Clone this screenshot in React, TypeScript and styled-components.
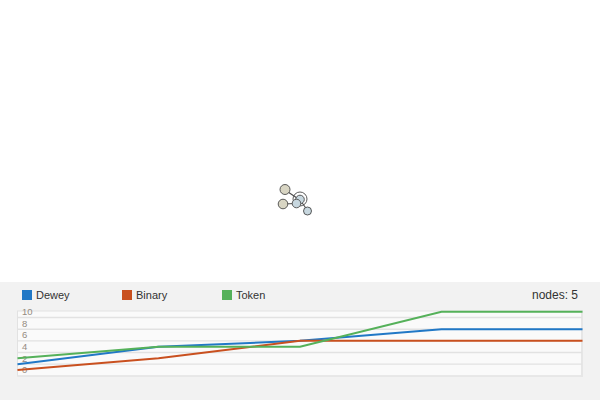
import React from "react";
import styled, { createGlobalStyle } from "styled-components";

const Global = createGlobalStyle`
  html, body { margin: 0; padding: 0; background: #ffffff; }
  body { font-family: "Liberation Sans", Arial, sans-serif; }
`;

const Page = styled.div`
  width: 600px;
  height: 400px;
  display: flex;
  flex-direction: column;
  overflow: hidden;
`;

const Canvas = styled.div`
  height: 282px;
  background: #ffffff;
  position: relative;
`;

const GraphSvg = styled.svg`
  display: block;
  width: 600px;
  height: 282px;
`;

const Panel = styled.div`
  flex: 1;
  background: #f2f2f2;
  padding: 0 17px;
  display: flex;
  flex-direction: column;
`;

const LegendRow = styled.div`
  height: 26px;
  display: flex;
  align-items: center;
  padding-left: 5px;
  margin-bottom: -4px;
`;

const LegendItem = styled.div`
  width: 100px;
  display: flex;
  align-items: center;
  gap: 4px;
  font-size: 11px;
  color: #333333;
`;

const Swatch = styled.span<{ $color: string }>`
  width: 10px;
  height: 10px;
  background: ${(p) => p.$color};
  display: inline-block;
`;

const NodeCount = styled.div`
  margin-left: auto;
  margin-right: 5px;
  font-size: 12px;
  color: #333333;
`;

const ChartSvg = styled.svg`
  display: block;
  width: 566px;
  height: 74px;
`;

const series = [
  { name: "Dewey", color: "#2178c6", data: [1, 4, 5, 7, 7] },
  { name: "Binary", color: "#c9501f", data: [0, 2, 5, 5, 5] },
  { name: "Token", color: "#55b15a", data: [2, 4, 4, 10, 10] },
];

const TOP = 7;
const xs = [0.5, 141.5, 283, 424.5, 565.5];
const yOf = (v: number) => TOP + 59 - 5.83 * v;

function Graph() {
  const stroke = "#4a4a4a";
  return (
    <GraphSvg viewBox="0 0 600 282">
      <line x1={285} y1={190} x2={300} y2={200} stroke={stroke} strokeWidth={1.1} />
      <line x1={283} y1={204} x2={296} y2={203.5} stroke={stroke} strokeWidth={1.1} />
      <line x1={300} y1={200} x2={308} y2={211} stroke={stroke} strokeWidth={1.1} />
      <circle cx={285} cy={189.5} r={5} fill="#d8d5c3" stroke={stroke} strokeWidth={0.9} />
      <circle cx={283} cy={204} r={4.8} fill="#d8d5c3" stroke={stroke} strokeWidth={0.9} />
      <circle cx={300} cy={199} r={7} fill="none" stroke={stroke} strokeWidth={0.9} />
      <circle cx={300} cy={199.5} r={4.3} fill="#c7d7df" stroke={stroke} strokeWidth={0.9} />
      <circle cx={296.5} cy={203.5} r={4.3} fill="#c7d7df" stroke={stroke} strokeWidth={0.9} />
      <circle cx={307.5} cy={211} r={4} fill="#c7d7df" stroke={stroke} strokeWidth={0.9} />
    </GraphSvg>
  );
}

function Chart() {
  const grid = [1, 3, 5, 7, 9];
  const labels = [0, 2, 4, 6, 8, 10];
  return (
    <ChartSvg viewBox="0 0 566 74">
      <rect x={0.5} y={TOP} width={565} height={65} fill="#fafafa" stroke="#e2e2e2" strokeWidth={1} />
      <line x1={565} y1={TOP} x2={565} y2={TOP + 65.5} stroke="#e6e6e6" strokeWidth={2} />
      <line x1={0.5} y1={TOP + 65} x2={566} y2={TOP + 65} stroke="#e6e6e6" strokeWidth={1.5} />
      {grid.map((g) => (
        <line key={g} x1={1} y1={yOf(g)} x2={565} y2={yOf(g)} stroke="#e2e2e2" strokeWidth={1.4} />
      ))}
      {labels.map((l) => (
        <text
          key={l}
          x={5}
          y={yOf(l) + 3.4}
          fontSize={9.5}
          fill="#948b80"
          fontFamily="Liberation Sans, Arial, sans-serif"
        >
          {l}
        </text>
      ))}
      {series.map((s) => (
        <polyline
          key={s.name}
          points={s.data.map((v, i) => `${xs[i]},${yOf(v)}`).join(" ")}
          fill="none"
          stroke={s.color}
          strokeWidth={2}
        />
      ))}
    </ChartSvg>
  );
}

export default function App() {
  return (
    <>
      <Global />
      <Page>
        <Canvas>
          <Graph />
        </Canvas>
        <Panel>
          <LegendRow>
            {series.map((s) => (
              <LegendItem key={s.name}>
                <Swatch $color={s.color} />
                {s.name}
              </LegendItem>
            ))}
            <NodeCount>nodes: 5</NodeCount>
          </LegendRow>
          <Chart />
        </Panel>
      </Page>
    </>
  );
}
